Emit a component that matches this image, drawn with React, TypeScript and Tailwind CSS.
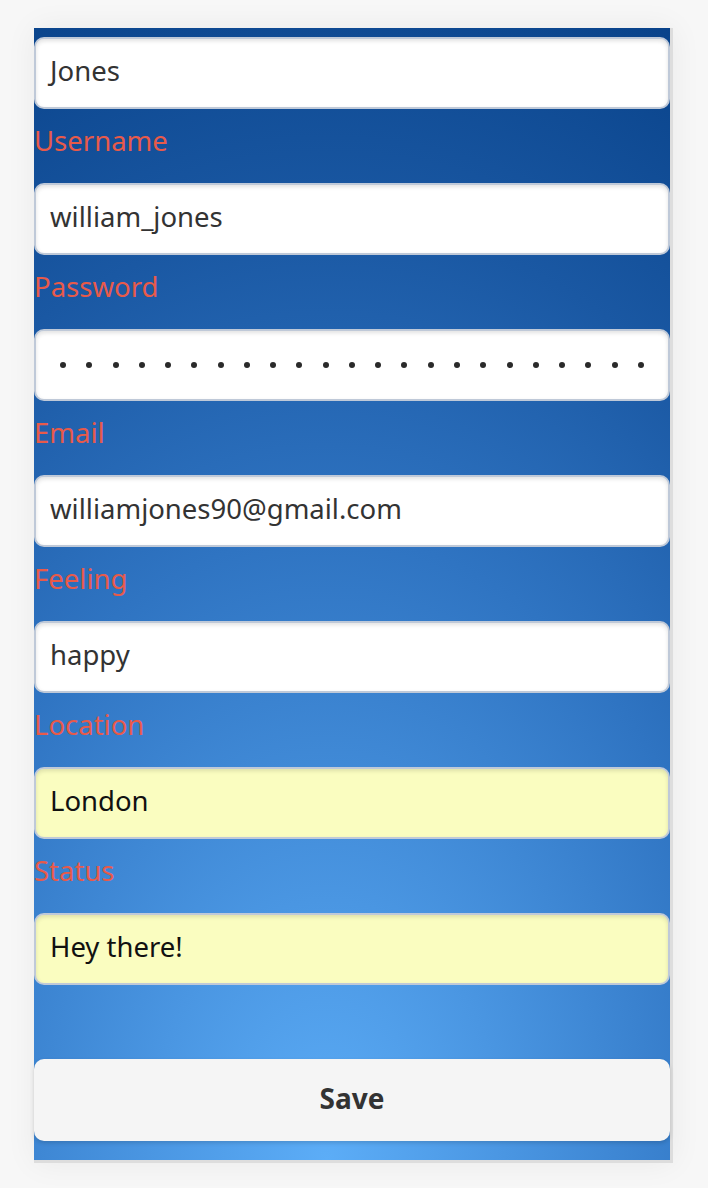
import React from "react";

const inputBase =
  "h-[72px] w-full rounded-[10px] border-2 border-[#bfc9d8] shadow-[inset_0_2px_4px_rgba(0,0,0,0.12)] flex items-center pl-[14px] pb-[4px] text-[27.5px]";

function Field({ value, yellow }: { value: string; yellow?: boolean }) {
  return (
    <div
      className={
        inputBase +
        (yellow ? " bg-[#fafdc0] text-[#111]" : " bg-white text-[#333]")
      }
    >
      {value}
    </div>
  );
}

function Label({ text }: { text: string }) {
  return (
    <div className="pt-[14px] pb-[24px] h-[74px] text-[27.5px] leading-[36px] text-[#e85a4a]">
      {text}
    </div>
  );
}

export default function App() {
  const dots = Array.from({ length: 23 });
  return (
    <div
      className="min-h-[1188px] bg-[#f7f7f7] pt-[28px] pl-[34px]"
      style={{ fontFamily: '"Noto Sans", "Open Sans", sans-serif' }}
    >
      <div className="w-[639px] border-r-[3px] border-b-[3px] border-[#dddddd] shadow-[0_0_30px_rgba(0,0,0,0.06)]">
        <div className="w-[636px] px-0 pt-[9px] pb-[19px] bg-[radial-gradient(ellipse_140%_115%_at_46%_100%,#5cadf7_0%,#4a96e2_20%,#2f74c2_48%,#1a58a3_72%,#053e85_100%)]">
          <Field value="Jones" />
          <Label text="Username" />
          <Field value="william_jones" />
          <Label text="Password" />
          <div className={inputBase + " bg-white text-[#333] pr-[24px]"}>
            <div className="flex w-full justify-between pl-[10px] pt-[4px]">
              {dots.map((_, i) => (
                <span
                  key={i}
                  className="block w-[6px] h-[6px] rounded-full bg-[#2a2a2a]"
                />
              ))}
            </div>
          </div>
          <Label text="Email" />
          <Field value="williamjones90@gmail.com" />
          <Label text="Feeling" />
          <Field value="happy" />
          <Label text="Location" />
          <Field value="London" yellow />
          <Label text="Status" />
          <Field value="Hey there!" yellow />
          <div className="h-[74px]" />
          <button className="h-[82px] w-full rounded-[10px] bg-[#f5f5f5] text-[28px] font-bold text-[#333] shadow-[0_2px_4px_rgba(0,0,0,0.15)] pb-[4px]">
            Save
          </button>
        </div>
      </div>
    </div>
  );
}
